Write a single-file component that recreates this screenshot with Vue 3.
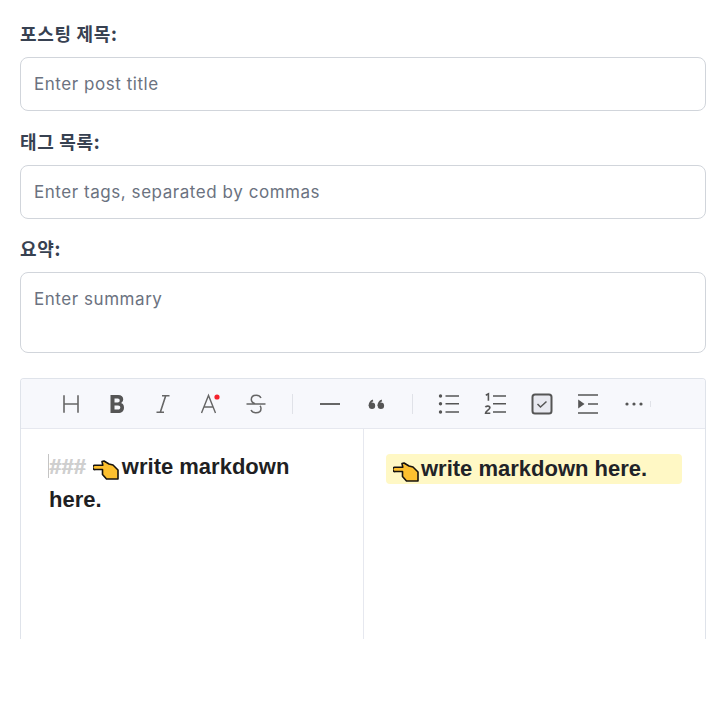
<script setup>
const groups = [
  ['h', 'b', 'i', 'a', 's'],
  ['hr', 'q'],
  ['ul', 'ol', 'chk', 'ind', 'more'],
]
</script>

<template>
  <main class="page">
    <div class="field">
      <label class="label">포스팅 제목:</label>
      <input class="control" placeholder="Enter post title" />
    </div>
    <div class="field">
      <label class="label">태그 목록:</label>
      <input class="control" placeholder="Enter tags, separated by commas" />
    </div>
    <div class="field">
      <label class="label">요약:</label>
      <textarea class="control area" placeholder="Enter summary"></textarea>
    </div>

    <section class="editor">
      <div class="toolbar">
        <template v-for="(group, gi) in groups" :key="gi">
          <span v-if="gi" class="divider"></span>
          <span v-for="name in group" :key="name" class="tool">
            <svg width="24" height="24" viewBox="0 0 24 24" fill="none" stroke="#5a5a5f" stroke-width="1.5">
              <template v-if="name === 'h'">
                <path d="M5 3.200v17.600M19 3.200v17.600M5 12h14" stroke="#666" stroke-width="1.600" />
              </template>
              <template v-else-if="name === 'b'">
                <path fill-rule="evenodd" stroke="none" fill="#555" d="M5.500 3h7.700c3.300 0 5 1.700 5 4.300 0 1.800-.9 3.200-2.300 3.800 1.900.5 3.100 2.200 3.100 4.300C19 19 16.700 21 13.200 21H5.500zM9.500 6.400v4h3.100c1.400 0 2.100-.8 2.100-2s-.7-2-2.100-2zM9.500 13.500v4.100h3.500c1.500 0 2.300-.8 2.300-2.100s-.8-2-2.300-2z" />
              </template>
              <template v-else-if="name === 'i'">
                <path d="M11 3.700h7.500M5.500 20.300H13M14.700 3.700 9.300 20.300" stroke="#666" stroke-width="1.600" />
              </template>
              <template v-else-if="name === 'a'">
                <path d="M3.500 21 10.500 3.500 17.500 21M6 15h9" stroke="#666" stroke-width="1.400" />
                <circle cx="19" cy="5" r="2.600" fill="#f5222d" stroke="none" />
              </template>
              <template v-else-if="name === 's'">
                <path d="M17 6C16 4 14.300 3.200 12.300 3.200 9.300 3.200 7.300 5 7.300 7.500c0 2 1.200 3.300 3.700 4.200M7 18c1 2 2.800 2.800 5 2.800 3 0 5-1.800 5-4.300 0-1-.3-2-1-2.700M2.500 12h19" stroke="#666" stroke-width="1.500" />
              </template>
              <template v-else-if="name === 'hr'">
                <path d="M2 12h20" stroke="#666" stroke-width="1.800" />
              </template>
              <template v-else-if="name === 'q'">
                <g fill="#555" stroke="none">
                  <circle cx="8" cy="13.800" r="3.200" />
                  <circle cx="16.900" cy="13.800" r="3.200" />
                </g>
                <path d="M5.500 14c0-2.800 1-4.700 3.500-5.700M14.400 14c0-2.800 1-4.700 3.500-5.700" stroke="#555" stroke-width="1.800" />
              </template>
              <template v-else-if="name === 'ul'">
                <path d="M8.500 4h13.500M8.500 11.800h13.500M8.500 20h13.500" stroke="#555" stroke-width="1.600" />
                <circle cx="3.500" cy="4" r="1.700" fill="#555" stroke="none" />
                <circle cx="3.500" cy="11.800" r="1.700" fill="#555" stroke="none" />
                <circle cx="3.500" cy="20" r="1.700" fill="#555" stroke="none" />
              </template>
              <template v-else-if="name === 'ol'">
                <path d="M9 4h13M9 11.800h13M9 20h13" stroke="#555" stroke-width="1.600" />
                <path d="M1.800 3.200 4.400 1.800v7" stroke="#555" stroke-width="1.600" />
                <path d="M1.500 15.200c.4-1.500 4.400-1.600 4.400.6 0 1.800-4.400 3-4.400 5.400h4.800" stroke="#555" stroke-width="1.600" />
              </template>
              <template v-else-if="name === 'chk'">
                <rect x="2.500" y="2.500" width="19" height="19" rx="2.500" fill="#e8e9f0" stroke="#555" stroke-width="2" />
                <path d="m7.500 12 3 3 6-5.500" stroke="#555" stroke-width="1.500" />
              </template>
              <template v-else-if="name === 'ind'">
                <path d="M2 3h20M2 21h20M12 12h10" stroke="#555" stroke-width="1.600" />
                <path d="M2.200 7.500v9l6.300-4.500z" fill="#555" stroke="none" />
              </template>
              <template v-else>
                <circle cx="5" cy="12" r="1.600" fill="#555" stroke="none" />
                <circle cx="12" cy="12" r="1.600" fill="#555" stroke="none" />
                <circle cx="19" cy="12" r="1.600" fill="#555" stroke="none" />
              </template>
            </svg>
          </span>
        </template>
        <span class="tick"></span>
      </div>

      <div class="panes">
        <div class="pane source">
          <div class="line"><span class="caret"></span><span class="hash">###</span> <svg class="hand hand-src" viewBox="0 0 26 20"><path d="M1.500 5.200h8.300L9 1.500l2-.5 5 3 4 1 5 5v9H13.500L9.500 14.500V9.500H2.500a2 2 0 0 1-1-4.300z" fill="#fdc02f" stroke="#17130f" stroke-width="1.600" stroke-linejoin="round" /></svg>write markdown here.</div>
        </div>
        <div class="pane preview">
          <h3 class="heading"><svg class="hand" viewBox="0 0 26 20"><path d="M1.500 5.200h8.300L9 1.500l2-.5 5 3 4 1 5 5v9H13.500L9.500 14.500V9.500H2.500a2 2 0 0 1-1-4.300z" fill="#fdc02f" stroke="#17130f" stroke-width="1.600" stroke-linejoin="round" /></svg>write markdown here.</h3>
        </div>
      </div>
    </section>
  </main>
</template>

<style>
html, body { margin: 0; background: #fff; }
</style>

<style scoped>
.page {
  width: 686px;
  margin-right: 12px;
  padding: 21px 0 0 20px;
  font-family: "Liberation Sans", Arial, sans-serif;
}
.field { margin-bottom: 17.2px; }
.label {
  display: block;
  font: 700 18px/24px "Noto Sans CJK KR", sans-serif;
  letter-spacing: 0.7px;
  color: #374151;
  margin-bottom: 12px;
}
.control {
  display: block;
  box-sizing: border-box;
  width: 100%;
  height: 54.4px;
  padding: 0 13px;
  border: 1px solid #d1d5db;
  border-radius: 8px;
  outline: none;
  background: #fff;
  font: 400 17px/24px Inter, sans-serif;
  letter-spacing: 0.55px;
  color: #374151;
}
.control::placeholder { color: #6b7280; opacity: 1; }
.area {
  height: 81px;
  padding: 14px 13px;
  resize: none;
}
.field:last-of-type { margin-bottom: 25px; }
.editor {
  box-sizing: border-box;
  width: 686px;
  height: 261px;
  overflow: hidden;
  border: 1px solid #dfe3ea;
  border-bottom: 0;
  border-radius: 4px 4px 0 0;
}
.toolbar {
  position: relative;
  display: flex;
  align-items: center;
  box-sizing: border-box;
  height: 50px;
  padding-left: 27px;
  background: #f7f8fc;
  border-bottom: 1px solid #e6e8ef;
}
.tool {
  display: flex;
  flex: 0 0 46.2px;
  align-items: center;
  justify-content: center;
  height: 24px;
}
.divider {
  flex: 0 0 1px;
  height: 20px;
  margin: 0 13px 0 13.500px;
  background: #e0e2e8;
}
.tick {
  position: absolute;
  left: 629px;
  top: 22px;
  width: 1px;
  height: 6px;
  background: #e0e2e8;
}
.panes { display: flex; height: 210px; }
.pane { box-sizing: border-box; }
.source {
  flex: 0 0 343px;
  padding: 21px 28px 0;
  border-right: 1px solid #e6e8ef;
}
.preview { flex: 1; min-width: 0; padding: 25px 23px 0 22px; }
.line {
  position: relative;
  font: 700 22px/33px "Liberation Sans", Arial, sans-serif;
  color: #1f1f23;
}
.caret {
  position: absolute;
  left: -1px;
  top: 4px;
  width: 1px;
  height: 24px;
  background: #c4c4c4;
}
.hash { color: #cfcfcf; text-shadow: 0.6px 0 0 #cfcfcf; }
.hand {
  display: inline-block;
  width: 26px;
  height: 20px;
  margin: 0 2px 0 0;
  vertical-align: -5.500px;
}
.hand-src { margin: 0 2.500px 0 1.500px; }
.heading {
  margin: 0;
  padding: 0 7px;
  border-radius: 4px;
  background: #fff8c5;
  font: 700 22px/30px "Liberation Sans", Arial, sans-serif;
  color: #1f2328;
}
</style>
